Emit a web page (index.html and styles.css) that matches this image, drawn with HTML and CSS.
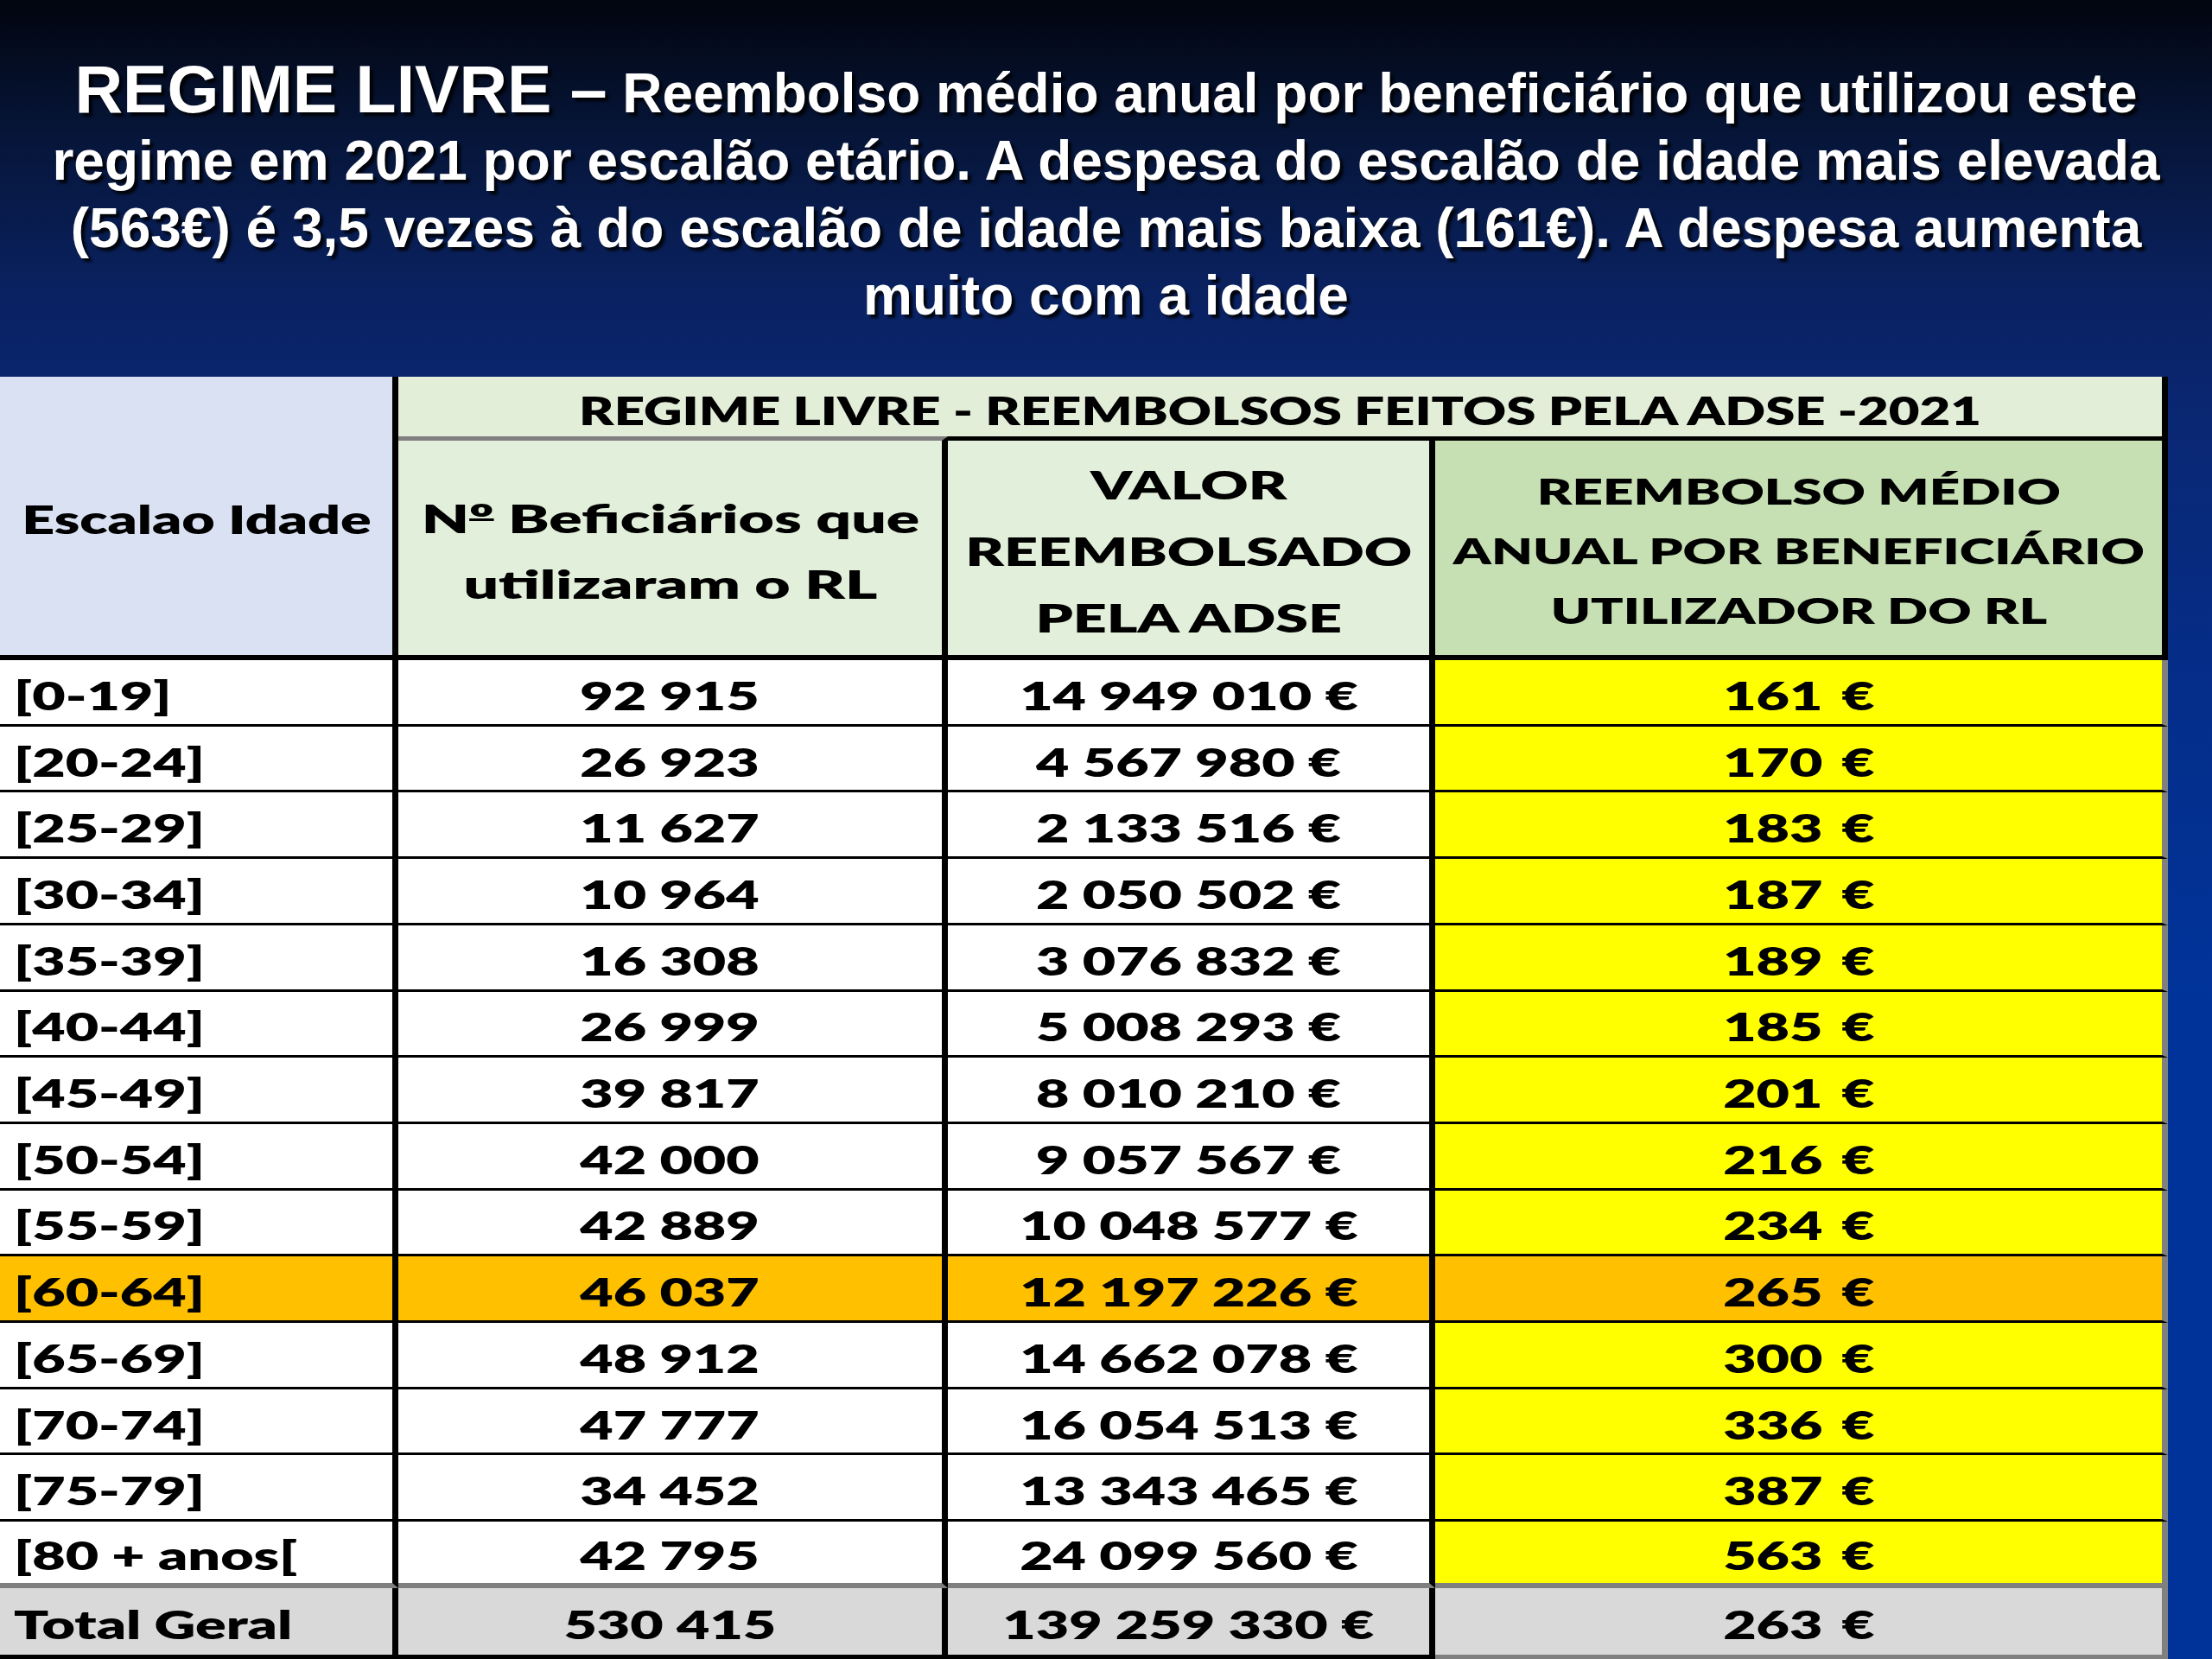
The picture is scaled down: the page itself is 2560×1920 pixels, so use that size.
FILE: index.html
```html
<!DOCTYPE html>
<html lang="pt">
<head>
<meta charset="utf-8">
<title>Regime Livre – Reembolsos ADSE 2021</title>
<link rel="stylesheet" href="styles.css">
</head>
<body>
<div class="slide">
  <header class="heading">
    <h1 class="title"><span class="lead">REGIME LIVRE –</span> Reembolso médio anual por beneficiário que utilizou este<br>regime em 2021 por escalão etário. A despesa do escalão de idade mais elevada<br>(563€) é 3,5 vezes à do escalão de idade mais baixa (161€). A despesa aumenta<br>muito com a idade</h1>
  </header>
  <div class="grid">
    <div class="c h-age"><span class="t">Escalao Idade</span></div>
    <div class="c h-title"><span class="t">REGIME LIVRE - REEMBOLSOS FEITOS PELA ADSE -2021</span></div>
    <div class="c h-n"><span class="t">N<span class="ord">º</span> Beficiários que<br>utilizaram o RL</span></div>
    <div class="c h-val"><span class="t">VALOR<br>REEMBOLSADO<br>PELA ADSE</span></div>
    <div class="c h-avg"><span class="t">REEMBOLSO MÉDIO<br>ANUAL POR BENEFICIÁRIO<br>UTILIZADOR DO RL</span></div>

    <div class="c age"><span class="t">[0-19]</span></div><div class="c num"><span class="t">92 915</span></div><div class="c num"><span class="t">14 949 010 €</span></div><div class="c avg"><span class="t">161 €</span></div>
    <div class="c age"><span class="t">[20-24]</span></div><div class="c num"><span class="t">26 923</span></div><div class="c num"><span class="t">4 567 980 €</span></div><div class="c avg"><span class="t">170 €</span></div>
    <div class="c age"><span class="t">[25-29]</span></div><div class="c num"><span class="t">11 627</span></div><div class="c num"><span class="t">2 133 516 €</span></div><div class="c avg"><span class="t">183 €</span></div>
    <div class="c age"><span class="t">[30-34]</span></div><div class="c num"><span class="t">10 964</span></div><div class="c num"><span class="t">2 050 502 €</span></div><div class="c avg"><span class="t">187 €</span></div>
    <div class="c age"><span class="t">[35-39]</span></div><div class="c num"><span class="t">16 308</span></div><div class="c num"><span class="t">3 076 832 €</span></div><div class="c avg"><span class="t">189 €</span></div>
    <div class="c age"><span class="t">[40-44]</span></div><div class="c num"><span class="t">26 999</span></div><div class="c num"><span class="t">5 008 293 €</span></div><div class="c avg"><span class="t">185 €</span></div>
    <div class="c age"><span class="t">[45-49]</span></div><div class="c num"><span class="t">39 817</span></div><div class="c num"><span class="t">8 010 210 €</span></div><div class="c avg"><span class="t">201 €</span></div>
    <div class="c age"><span class="t">[50-54]</span></div><div class="c num"><span class="t">42 000</span></div><div class="c num"><span class="t">9 057 567 €</span></div><div class="c avg"><span class="t">216 €</span></div>
    <div class="c age"><span class="t">[55-59]</span></div><div class="c num"><span class="t">42 889</span></div><div class="c num"><span class="t">10 048 577 €</span></div><div class="c avg"><span class="t">234 €</span></div>
    <div class="c age hl"><span class="t">[60-64]</span></div><div class="c num hl"><span class="t">46 037</span></div><div class="c num hl"><span class="t">12 197 226 €</span></div><div class="c avg hl"><span class="t">265 €</span></div>
    <div class="c age"><span class="t">[65-69]</span></div><div class="c num"><span class="t">48 912</span></div><div class="c num"><span class="t">14 662 078 €</span></div><div class="c avg"><span class="t">300 €</span></div>
    <div class="c age"><span class="t">[70-74]</span></div><div class="c num"><span class="t">47 777</span></div><div class="c num"><span class="t">16 054 513 €</span></div><div class="c avg"><span class="t">336 €</span></div>
    <div class="c age"><span class="t">[75-79]</span></div><div class="c num"><span class="t">34 452</span></div><div class="c num"><span class="t">13 343 465 €</span></div><div class="c avg"><span class="t">387 €</span></div>
    <div class="c age last"><span class="t">[80 + anos[</span></div><div class="c num last"><span class="t">42 795</span></div><div class="c num last"><span class="t">24 099 560 €</span></div><div class="c avg last"><span class="t">563 €</span></div>

    <div class="c age tot"><span class="t">Total Geral</span></div><div class="c num tot"><span class="t">530 415</span></div><div class="c num tot"><span class="t">139 259 330 €</span></div><div class="c avg tot"><span class="t">263 €</span></div>
  </div>
</div>
</body>
</html>
```
FILE: styles.css
```css
html, body {
  margin: 0;
  padding: 0;
}
body {
  width: 2560px;
  height: 1920px;
  overflow: hidden;
  background: #003399;
}
.slide {
  width: 2560px;
  height: 1920px;
  display: flex;
  flex-direction: column;
  background: linear-gradient(180deg, #02050f 0%, #061538 8%, #0a2262 18%, #0a2670 24%, #052d88 40%, #003399 60%, #003399 100%);
}
.heading {
  height: 436px;
  box-sizing: border-box;
  padding-top: 64px;
}
.title {
  margin: 0;
  text-align: center;
  color: #ffffff;
  font-family: "Liberation Sans", Arial, sans-serif;
  font-weight: 700;
  font-size: 64px;
  line-height: 78px;
  text-shadow: 4px 4px 3px rgba(0, 0, 0, 0.85);
}
.lead {
  font-size: 77px;
}
.grid {
  display: grid;
  width: 2509px;
  grid-template-columns: 461px 636px 564px 848px;
  grid-template-rows: 69px 259px repeat(14, 76.714px) 82px;
  font-family: Lato, "Open Sans", sans-serif;
  font-weight: 800;
  color: #000;
  font-size: 46px;
}
.c {
  box-sizing: border-box;
  display: flex;
  align-items: center;
  justify-content: center;
  padding-top: 7px;
  border-right: 7px solid #000;
  border-bottom: 3px solid #000;
  background: #ffffff;
  overflow: hidden;
  text-align: center;
}
.t {
  display: inline-block;
  white-space: nowrap;
  transform: scaleX(1.44);
}
.ord {
  text-decoration: underline;
  text-decoration-thickness: 0.06em;
  text-underline-offset: -0.36em;
}
.h-age {
  grid-row: 1 / 3;
  background: #d9e1f2;
  border-bottom: 6px solid #000;
  justify-content: center;
}
.h-title {
  grid-column: 2 / 5;
  background: #e3eed9;
  border-bottom: 0;
}
.h-title .t {
  transform: scaleX(1.34);
}
.h-n, .h-val, .h-avg {
  border-bottom: 6px solid #000;
  border-top: 5px solid #000;
  line-height: 77px;
  background: #e2efda;
}
.h-n {
  border-top-color: #7f7f7f;
  line-height: 76px;
}
.h-n .t {
  transform: scaleX(1.55);
}
.h-val .t {
  transform: scaleX(1.48);
}
.h-avg {
  background: #c6e0b4;
  font-size: 41px;
  line-height: 69px;
}
.h-avg .t {
  transform: scaleX(1.51);
}
.age {
  justify-content: flex-start;
  padding-left: 16px;
}
.age .t {
  transform-origin: left center;
}
.avg {
  background: #ffff00;
  border-right-color: #808080;
}
.avg .t {
  word-spacing: 0.1em;
}
.hl {
  background: #ffc000;
}
.last {
  border-bottom: 6px solid #7f7f7f;
}
.tot {
  background: #d9d9d9;
  border-bottom: 5px solid #000;
}
.avg.tot {
  border-bottom-color: #808080;
}
```
